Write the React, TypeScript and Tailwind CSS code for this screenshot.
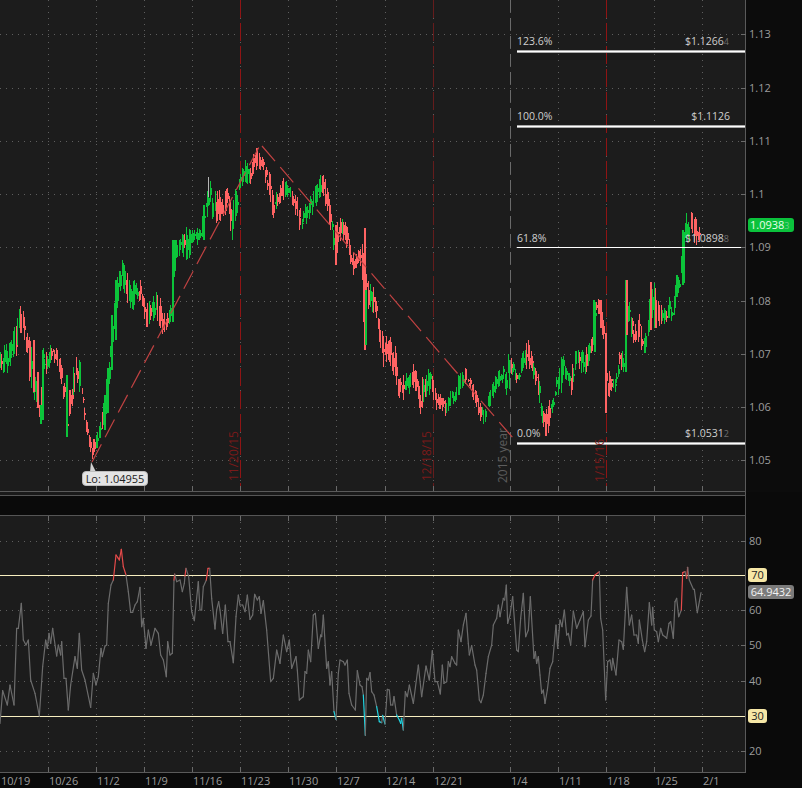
import React from "react";

function rng(seed: number) {
  let a = seed;
  return () => {
    a |= 0;
    a = (a + 0x6d2b79f5) | 0;
    let t = Math.imul(a ^ (a >>> 15), 1 | a);
    t = (t + Math.imul(t ^ (t >>> 7), 61 | t)) ^ t;
    return ((t ^ (t >>> 14)) >>> 0) / 4294967296;
  };
}

const ENV: number[][] = [
  [0,340,372],[5,345,378],[10,342,367],[16,318,357],[22,299,330],[25,325,345],[30,340,390],[37,387,407],[40,407,422],[43,345,380],[48,355,370],[52,335,360],[58,352,368],[62,363,390],[67,412,437],[70,390,412],[75,348,397],[80,362,393],[85,412,427],[88,430,443],[92,440,461],[97,432,450],[102,412,430],[107,368,413],[110,337,370],[113,313,340],[116,280,313],[122,258,285],[128,275,308],[133,280,310],[140,280,305],[145,303,330],[150,300,323],[158,288,323],[163,313,338],[168,313,327],[171,300,322],[172,240,322],[175,238,262],[180,238,255],[186,225,260],[190,230,258],[195,225,250],[200,230,238],[203,205,237],[208,177,217],[213,187,228],[218,187,220],[222,198,223],[227,183,217],[232,210,240],[234,190,235],[240,173,193],[245,159,183],[250,163,185],[255,148,170],[260,147,170],[265,160,185],[270,172,210],[273,197,218],[278,188,205],[283,178,202],[288,182,198],[293,193,207],[298,197,228],[302,207,235],[307,200,222],[312,190,215],[318,182,202],[322,168,193],[326,182,212],[330,205,230],[335,227,265],[338,215,247],[342,218,237],[347,225,255],[351,247,272],[355,257,278],[358,248,263],[361,245,270],[364,228,350],[366,270,300],[368,280,310],[372,280,312],[376,303,323],[380,320,350],[384,340,373],[387,333,357],[390,337,368],[395,343,380],[398,373,397],[402,377,402],[405,370,397],[409,373,397],[412,357,387],[417,363,393],[420,383,416],[425,365,397],[431,372,395],[436,392,410],[440,392,410],[445,400,417],[450,390,407],[455,392,403],[458,375,400],[463,368,387],[467,368,387],[471,380,397],[475,388,403],[479,400,420],[484,412,425],[488,395,415],[493,380,400],[497,372,390],[502,367,383],[505,358,397],[510,350,387],[513,360,380],[517,373,390],[521,357,375],[524,343,367],[530,338,373],[534,360,383],[538,373,397],[541,397,417],[544,417,440],[548,400,433],[553,393,408],[556,373,400],[560,358,397],[564,355,380],[568,373,382],[571,370,395],[575,343,370],[579,350,370],[584,350,377],[588,343,367],[592,337,353],[596,302,317],[599,297,315],[601,303,328],[604,328,350],[605,333,413],[607,370,403],[612,370,390],[616,373,393],[619,347,377],[624,353,382],[625,280,333],[627,290,327],[632,313,340],[635,323,353],[639,313,343],[643,333,362],[647,333,347],[650,282,313],[654,283,330],[658,300,327],[662,303,325],[666,310,323],[670,293,318],[673,303,328],[676,275,297],[680,275,295],[682,230,283],[684,230,243],[686,213,243],[689,220,243],[691,212,233],[694,208,243],[697,230,248],[700,225,245],
];

// Long single bars on the steep moves: x, top, bottom, green?
const LONG: [number, number, number, boolean][] = [
  [33,340,392,false],[37,372,408,false],[40,405,424,true],[42,350,420,true],[66,375,437,true],[69,390,414,false],
  [104,395,430,true],[107,368,413,true],[111,315,370,true],[115,280,340,true],[172,240,322,true],[174,240,262,true],
  [203,205,240,true],[335,225,265,false],[364,228,350,false],[365,290,345,true],[593,300,345,true],[594,302,352,true],
  [600,300,328,false],[605,333,413,false],[625,280,372,true],[626,280,335,false],[650,282,330,false],[676,275,297,true],
  [682,230,285,true],[683,232,283,true],
];

function envAt(x: number): [number, number] {
  for (let i = 1; i < ENV.length; i++) {
    if (x <= ENV[i][0]) {
      const a = ENV[i - 1], b = ENV[i];
      const t = (x - a[0]) / (b[0] - a[0] || 1);
      return [a[1] + (b[1] - a[1]) * t, a[2] + (b[2] - a[2]) * t];
    }
  }
  const l = ENV[ENV.length - 1];
  return [l[1], l[2]];
}

type Bar = { x: number; hi: number; lo: number; o: number; c: number; up: boolean; w: number };
const BARS: Bar[] = (() => {
  const r = rng(41);
  const out: Bar[] = [];
  let up = true;
  for (let i = 0; i * 1.43 <= 700; i++) {
    const x = Math.round(i * 1.43);
    const [t, b] = envAt(x);
    const [t1, b1] = envAt(x + 7);
    const [t0, b0] = envAt(Math.max(0, x - 7));
    const slope = (t1 + b1 - t0 - b0) / 2 / 14;
    const range = b - t;
    const u = r();
    const v = r();
    const hi = t + u * u * range * 0.5;
    const lo = b - v * v * range * 0.5;
    const pUp = Math.min(0.92, Math.max(0.08, 0.5 - slope * 0.35));
    if (r() < 0.55) up = r() < pUp;
    const a = hi + (lo - hi) * (0.15 + r() * 0.3);
    const d = hi + (lo - hi) * (0.5 + r() * 0.3);
    out.push({ x, hi, lo, o: a, c: d, up, w: r() < 0.75 ? 2 : 1 });
  }
  return out;
})();

const RSI_A = [[0,580],[8,482],[22,525],[30,465],[42,525],[50,295],[55,295],[64,220],[70,330],[78,345],[85,330],[92,450],[105,490],[118,558],[128,410],[137,330],[142,355],[147,310],[152,340],[158,295],[170,378],[175,345],[182,375],[185,335],[192,445],[198,445],[205,540],[212,465],[225,380],[232,415],[238,310],[245,420],[255,450],[272,532],[280,430],[288,465],[295,440],[303,355],[307,380],[315,348],[320,345],[325,220],[333,165],[340,150],[348,75],[355,85],[358,90],[364,58],[370,110],[378,135],[385,185],[392,247],[398,247],[405,225],[412,215],[420,172],[425,290],[430,265],[438,355],[445,300],[453,345],[465,295],[475,310],[482,375],[490,390],[499,440],[503,335],[510,375],[517,370],[522,150],[524,132],[530,155],[540,150],[547,185],[553,160],[555,138],[558,115],[566,140],[575,245],[583,272],[595,155],[600,240],[605,240],[610,170],[619,150],[621,136],[624,115],[629,115],[635,205],[645,297],[650,240],[656,215],[660,240],[668,310],[676,225],[684,335],[690,335],[700,398],[708,260],[715,195],[720,225],[728,225],[735,245],[742,195],[750,268],[758,255],[764,193],[772,210],[778,200],[783,250],[790,212],[800,300],[812,455],[820,445],[830,360],[840,400],[850,315],[860,365],[868,330],[875,415],[888,380],[892,420],[898,510]];
const RSI_B = [[0,508],[10,500],[15,425],[20,430],[25,360],[32,395],[40,255],[46,250],[55,355],[62,315],[65,320],[70,255],[80,415],[85,395],[90,465],[95,425],[102,545],[108,568],[115,430],[120,390],[130,395],[135,405],[142,390],[147,490],[155,525],[166,540],[172,422],[180,465],[186,470],[190,495],[196,616],[200,445],[205,450],[210,428],[215,485],[222,495],[230,530],[238,575],[245,578],[248,556],[255,582],[262,478],[268,480],[272,525],[278,525],[282,500],[290,555],[298,570],[302,580],[305,565],[310,600],[316,485],[322,500],[328,465],[340,520],[355,405],[365,500],[378,408],[388,450],[397,362],[405,455],[412,455],[421,492],[427,405],[432,460],[440,455],[445,395],[450,410],[455,380],[465,400],[470,405],[475,300],[483,335],[490,285],[498,250],[505,340],[508,375],[515,347],[525,405],[530,420],[538,510],[543,518],[550,495],[558,430],[565,380],[575,345],[580,285],[590,265],[595,225],[600,260],[610,205],[614,210],[619,165],[623,280],[630,255],[638,200],[650,360],[655,365],[662,265],[670,190],[677,320],[685,300],[691,200],[702,385],[706,365],[710,400],[715,380]];
const RSI_C = [[0,435],[5,490],[10,480],[15,520],[22,480],[30,415],[38,395],[48,285],[53,355],[60,270],[66,290],[73,240],[80,315],[85,310],[92,345],[100,243],[110,295],[120,270],[130,245],[135,350],[145,270],[153,258],[158,150],[165,135],[178,125],[182,265],[188,300],[197,510],[203,395],[210,390],[215,420],[218,385],[228,435],[237,330],[245,335],[250,358],[260,172],[268,285],[275,255],[282,315],[290,315],[295,340],[298,270],[307,330],[314,365],[320,335],[328,218],[335,285],[338,232],[343,300],[350,305],[355,335],[362,295],[368,315],[375,320],[380,325],[387,280],[392,275],[400,325],[405,215],[410,205],[416,260],[424,240],[428,128],[435,125],[440,145],[443,112],[448,150],[460,178],[463,178],[472,248],[483,188]];

const RSI: number[][] = [
  ...RSI_A.map(([x, y]) => [x / 3, 530 + y / 3]),
  ...RSI_B.map(([x, y]) => [300 + x / 3, 530 + y / 3]),
  ...RSI_C.map(([x, y]) => [540 + x / 3, 530 + y / 3]),
];

const VX = [48, 96, 144, 192, 240, 288, 336, 385, 433, 510, 558, 606, 654, 702];
const PRICE_Y = [34, 88, 141, 194, 247, 301, 354, 407, 460];
const PRICE_L = ["1.13", "1.12", "1.11", "1.1", "1.09", "1.08", "1.07", "1.06", "1.05"];
const RSI_GRID = [541, 610, 645, 681, 751];
const RSI_TICKS = [[541, "80"], [610, "60"], [645, "50"], [681, "40"], [751, "20"]] as [number, string][];
const X_L = [[1,"10/19"],[49,"10/26"],[97,"11/2"],[145,"11/9"],[193,"11/16"],[241,"11/23"],[289,"11/30"],[337,"12/7"],[386,"12/14"],[434,"12/21"],[511,"1/4"],[559,"1/11"],[607,"1/18"],[655,"1/25"],[703,"2/1"]] as [number, string][];

const FONT = "'Open Sans', 'Liberation Sans', sans-serif";

function Grid({ ys, y0, y1 }: { ys: number[]; y0: number; y1: number }) {
  return (
    <g stroke="#5e5e5e" strokeWidth={1} strokeDasharray="1 5" shapeRendering="crispEdges">
      {ys.map((y) => (
        <line key={y} x1={0} x2={745} y1={y + 0.5} y2={y + 0.5} />
      ))}
      {VX.map((x) => (
        <line key={x} x1={x + 0.5} x2={x + 0.5} y1={y0} y2={y1} />
      ))}
    </g>
  );
}

function FibLabel({ y, pct, price, sub, right }: { y: number; pct: string; price: string; sub?: string; right: number }) {
  return (
    <g fontFamily={FONT} fontSize={10.5} fill="#cfcfcf">
      <text x={517} y={y}>{pct}</text>
      <text x={right} y={y} textAnchor="end">
        {price}
        {sub && <tspan fill="#6e6e6e" fontSize={9}>{sub}</tspan>}
      </text>
    </g>
  );
}

function PriceChart() {
  return (
    <svg className="block w-[745px] h-[491px]" viewBox="0 0 745 491">
      <Grid ys={PRICE_Y} y0={0} y1={487} />
      <g strokeWidth={1} shapeRendering="crispEdges">
        <line x1={240.5} x2={240.5} y1={0} y2={491} stroke="#8f1414" strokeDasharray="18 5" />
        <line x1={433.5} x2={433.5} y1={0} y2={491} stroke="#651c1c" strokeDasharray="18 5" />
        <line x1={606.5} x2={606.5} y1={0} y2={491} stroke="#8f1414" strokeDasharray="18 5" />
        <line x1={510.5} x2={510.5} y1={0} y2={491} stroke="#6a6a6a" strokeDasharray="12 6" />
      </g>
      <g shapeRendering="crispEdges" stroke="#6a6a6a">
        {VX.map((x) => (
          <line key={x} x1={x + 0.5} x2={x + 0.5} y1={486} y2={491} />
        ))}
      </g>
      <g shapeRendering="crispEdges">
        {BARS.map((b, i) => {
          const col = b.up ? "#0cc43a" : "#ff6363";
          return (
            <g key={i}>
              <rect x={b.x} y={b.hi} width={1} height={b.lo - b.hi} fill={col} />
              <rect x={b.x} y={b.o} width={b.w} height={Math.max(1, b.c - b.o)} fill={col} />
            </g>
          );
        })}
        {LONG.map(([x, t, b, g]) => (
          <rect key={x} x={x} y={t} width={1.5} height={b - t} fill={g ? "#0cc43a" : "#ff6363"} />
        ))}
        <rect x={208} y={177} width={1} height={20} fill="#b5b5b5" />
      </g>
      <g stroke="#c04242" strokeWidth={1.2} strokeDasharray="20 8" fill="none">
        <line x1={92} y1={462} x2={259} y2={147} />
        <line x1={262} y1={146} x2={513} y2={438} />
      </g>
      <g shapeRendering="crispEdges">
        <rect x={517} y={50} width={228} height={3} fill="#a8a8a8" />
        <rect x={517} y={125} width={228} height={3} fill="#a8a8a8" />
        <rect x={517} y={442} width={228} height={3} fill="#a8a8a8" />
        <rect x={517} y={51} width={228} height={1} fill="#ffffff" />
        <rect x={517} y={126} width={228} height={1} fill="#ffffff" />
        <rect x={517} y={443} width={228} height={1} fill="#ffffff" />
        <rect x={517} y={247} width={228} height={1} fill="#ffffff" />
      </g>
      <FibLabel y={45} pct="123.6%" price="$1.1266" sub="4" right={729} />
      <FibLabel y={120} pct="100.0%" price="$1.1126" right={730} />
      <FibLabel y={242} pct="61.8%" price="$1.0898" sub="8" right={729} />
      <FibLabel y={437} pct="0.0%" price="$1.0531" sub="2" right={729} />
      <g fontFamily={FONT} fontSize={12}>
        <text transform="translate(238 481) rotate(-90)" fill="#7a1a1a">11/20/15</text>
        <text transform="translate(431 481) rotate(-90)" fill="#7a1a1a">12/18/15</text>
        <text transform="translate(604 482) rotate(-90)" fill="#7a1a1a">1/15/16</text>
        <text transform="translate(507 483) rotate(-90)" fill="#5d5d5d">2015 year</text>
      </g>
      <path d="M91 462 L96 472 L90 472 Z" fill="#d0d0d0" />
    </svg>
  );
}

function RsiChart() {
  const segs: React.ReactNode[] = [];
  for (let i = 1; i < RSI.length; i++) {
    const [x0, y0] = RSI[i - 1];
    const [x1, y1] = RSI[i];
    const col = y1 < 575.5 ? "#e64b4b" : y1 > 716.5 ? "#22d3e0" : "#6c6c6c";
    segs.push(<line key={i} x1={x0} y1={y0} x2={x1} y2={y1} stroke={col} strokeWidth={1.2} strokeLinecap="round" />);
  }
  return (
    <svg className="block w-[745px] h-[256px]" viewBox="0 516 745 256">
      <Grid ys={RSI_GRID} y0={522} y1={768} />
      <g shapeRendering="crispEdges" stroke="#6a6a6a">
        {VX.map((x) => (
          <g key={x}>
            <line x1={x + 0.5} x2={x + 0.5} y1={516} y2={521} />
            <line x1={x + 0.5} x2={x + 0.5} y1={767} y2={772} />
          </g>
        ))}
      </g>
      <g stroke="#f8efc0" strokeWidth={1} shapeRendering="crispEdges">
        <line x1={0} x2={745} y1={575.5} y2={575.5} />
        <line x1={0} x2={745} y1={716.5} y2={716.5} />
      </g>
      {segs}
    </svg>
  );
}

function AxisLabel({ y, text }: { y: number; text: string }) {
  return (
    <>
      <div className="absolute left-0 w-[5px] h-px -ml-[5px] bg-[#6a6a6a]" style={{ top: y }} />
      <div className="absolute left-[3px] h-[14px] leading-[14px] text-[11px] text-[#9c9c9c]" style={{ top: y - 7 }}>
        {text}
      </div>
    </>
  );
}

export default function App() {
  return (
    <div
      className="relative flex flex-col w-[802px] h-[788px] overflow-hidden bg-[#0a0a0a]"
      style={{ fontFamily: FONT }}
    >
      {/* price panel */}
      <div className="flex h-[492px] shrink-0">
        <div className="relative w-[746px] bg-[#1c1c1c] border-r border-b border-[#5a5a5a]">
          <PriceChart />
          <div className="absolute left-[82px] top-[471px] h-[15px] w-[66px] rounded-[4px] bg-[#e4e4e4] border border-[#bdbdbd] text-[11px] leading-[13px] text-[#222] text-center whitespace-nowrap">
            Lo: 1.04955
          </div>
        </div>
        <div className="relative flex-1 bg-[#0c0c0c]">
          {PRICE_Y.map((y, i) => (
            <AxisLabel key={y} y={y} text={PRICE_L[i]} />
          ))}
          <div className="absolute left-[2px] top-[218px] h-[14px] w-[46px] rounded-[3px] bg-[#0bc23c] text-[11px] leading-[14px] text-[#e8ffe8] pl-[2px] whitespace-nowrap">
            1.0938<span className="text-[9px] text-[#6fd08a]">3</span>
          </div>
        </div>
      </div>

      {/* gap */}
      <div className="h-[3px] w-[746px] shrink-0 bg-[#1a1a1a] border-r border-[#5a5a5a]" />

      {/* empty band */}
      <div className="h-[21px] w-[746px] shrink-0 bg-[#0a0a0a] border-t border-b border-r border-[#555555]" />

      {/* RSI panel */}
      <div className="flex h-[257px] shrink-0">
        <div className="relative w-[746px] bg-[#1c1c1c] border-r border-b border-[#5a5a5a]">
          <RsiChart />
        </div>
        <div className="relative flex-1">
          {RSI_TICKS.map(([y, t]) => (
            <AxisLabel key={y} y={y - 516} text={t} />
          ))}
          <div className="absolute left-[2px] top-[52px] h-[14px] w-[19px] rounded-[3px] bg-[#f6e7a6] text-[11px] leading-[14px] text-[#222] text-center">70</div>
          <div className="absolute left-[2px] top-[193px] h-[14px] w-[19px] rounded-[3px] bg-[#f6e7a6] text-[11px] leading-[14px] text-[#222] text-center">30</div>
          <div className="absolute left-[2px] top-[69px] h-[14px] w-[46px] rounded-[3px] bg-[#7b7b7b] text-[11px] leading-[14px] text-[#f2f2f2] text-center">64.9432</div>
        </div>
      </div>

      {/* time axis */}
      <div className="relative h-[15px] w-full shrink-0 text-[11px] leading-[15px] text-[#9c9c9c]">
        {X_L.map(([x, t]) => (
          <span key={t} className="absolute top-0" style={{ left: x }}>
            {t}
          </span>
        ))}
      </div>
    </div>
  );
}
